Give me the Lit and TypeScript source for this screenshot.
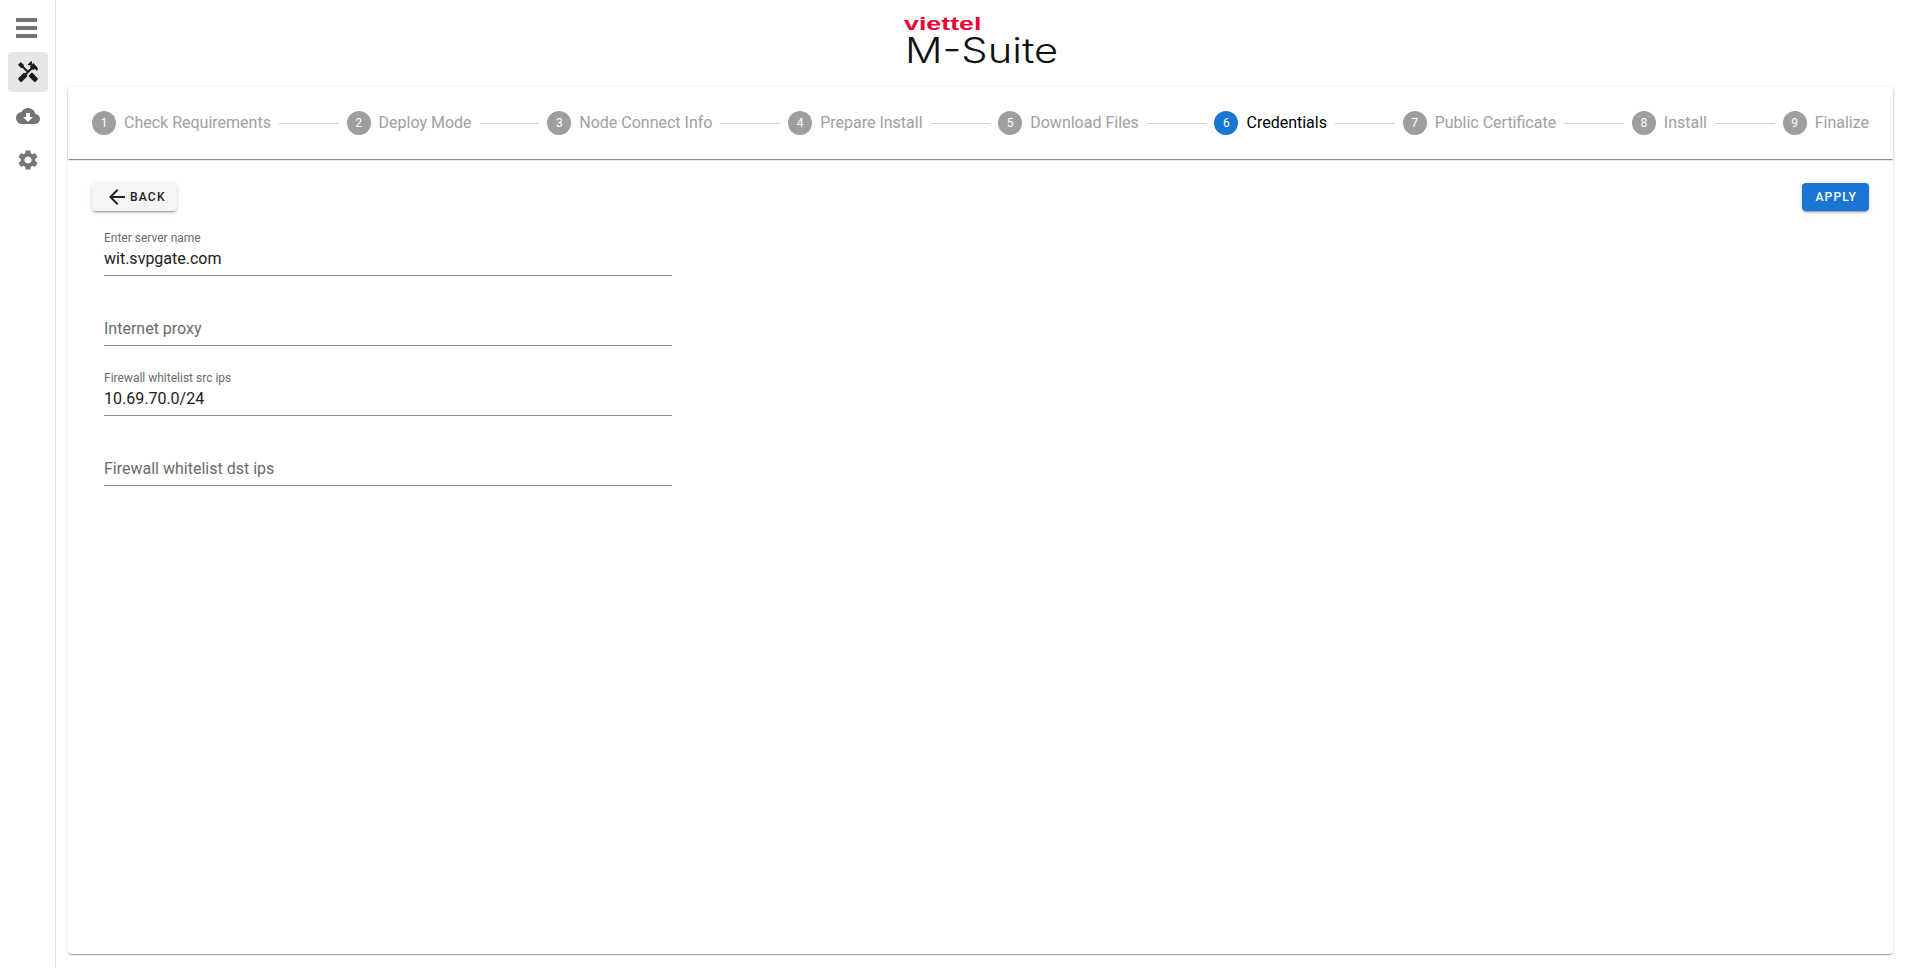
import { LitElement, html, css, svg } from "lit";
import { customElement } from "lit/decorators.js";

const STEPS = ["Check Requirements","Deploy Mode","Node Connect Info","Prepare Install","Download Files","Credentials","Public Certificate","Install","Finalize"];
const ACTIVE = 5;
const FIELDS = [
  { label: "Enter server name", value: "wit.svpgate.com" },
  { label: "Internet proxy", value: "" },
  { label: "Firewall whitelist src ips", value: "10.69.70.0/24" },
  { label: "Firewall whitelist dst ips", value: "" },
];
const ICONS = {
  handyman: "m21.67 18.17-5.3-5.3h-.99l-2.54 2.54v.99l5.3 5.3c.39.39 1.02.39 1.41 0l2.12-2.12c.39-.38.39-1.02 0-1.41zM17.34 10.19l1.41-1.41 2.12 2.12c1.17-1.17 1.17-3.07 0-4.24l-3.54-3.54-1.41 1.41V1.71l-.7-.71-3.54 3.54.71.71h2.83l-1.41 1.41 1.06 1.06-2.89 2.89-4.13-4.13V5.06L4.83 2.04 2 4.87 5.03 7.9h1.41l4.13 4.13-.85.85H7.6l-5.3 5.3c-.39.39-.39 1.02 0 1.41l2.12 2.12c.39.39 1.02.39 1.41 0l5.3-5.3v-2.12l5.15-5.15 1.06 1.05z",
  cloud: "M19.35 10.04C18.67 6.59 15.64 4 12 4 9.11 4 6.6 5.64 5.35 8.04 2.34 8.36 0 10.91 0 14c0 3.31 2.69 6 6 6h13c2.76 0 5-2.24 5-5 0-2.64-2.05-4.78-4.65-4.96zM17 13l-5 5-5-5h3V9h4v4h3z",
  settings: "M19.14 12.94c.04-.3.06-.61.06-.94 0-.32-.02-.64-.07-.94l2.03-1.58c.18-.14.23-.41.12-.61l-1.92-3.32c-.12-.22-.37-.29-.59-.22l-2.39.96c-.5-.38-1.03-.7-1.62-.94l-.36-2.54c-.04-.24-.24-.41-.48-.41h-3.84c-.24 0-.43.17-.47.41l-.36 2.54c-.59.24-1.13.57-1.62.94l-2.39-.96c-.22-.08-.47 0-.59.22L2.74 8.87c-.12.21-.08.47.12.61l2.03 1.58c-.05.3-.09.63-.09.94s.02.64.07.94l-2.03 1.58c-.18.14-.23.41-.12.61l1.92 3.32c.12.22.37.29.59.22l2.39-.96c.5.38 1.03.7 1.62.94l.36 2.54c.05.24.24.41.48.41h3.84c.24 0 .44-.17.47-.41l.36-2.54c.59-.24 1.13-.56 1.62-.94l2.39.96c.22.08.47 0 .59-.22l1.92-3.32c.12-.22.07-.47-.12-.61l-2.01-1.58zM12 15.6c-1.98 0-3.6-1.62-3.6-3.6s1.62-3.6 3.6-3.6 3.6 1.62 3.6 3.6-1.62 3.6-3.6 3.6z",
  arrow: "M20 11H7.83l5.59-5.59L12 4l-8 8 8 8 1.41-1.41L7.83 13H20v-2z",
};
const icon = (d: string, cls = "") => html`<svg class=${cls} viewBox="0 0 24 24" width="24" height="24" fill="currentColor">${svg`<path d=${d}></path>`}</svg>`;

@customElement("app-root")
export class AppRoot extends LitElement {
  static styles = css`
    :host { display: flex; width: 1905px; height: 968px; background: #fff; font-family: Roboto, "Liberation Sans", sans-serif; overflow: hidden; }
    .side { flex: none; border-right: 1px solid #e0e0e0; display: flex; flex-direction: column; gap: 4px; padding: 8px 0 0 8px; box-sizing: border-box; width: 56px; }
    .nav { width: 40px; height: 40px; border-radius: 4px; display: flex; align-items: center; justify-content: center; color: #757575; }
    .nav.on { background: #e6e6e6; color: #1a1a1a; }
    .menu { display: flex; flex-direction: column; gap: 4px; margin-left: -3px; }
    .menu i { display: block; width: 21px; height: 4px; background: #757575; }
    .main { flex: 1; min-width: 0; display: flex; flex-direction: column; padding: 0 12px 14px; }
    .head { height: 87px; flex: none; display: flex; justify-content: center; }
    .logo { width: 151px; padding-top: 14px; margin-left: -2px; display: flex; flex-direction: column; align-items: flex-start; white-space: nowrap; }
    .logo span { display: block; transform-origin: left center; }
    .vt { font: 700 19px/20px "Liberation Sans", sans-serif; color: #ee0033; transform: scaleX(1.41); }
    .ms { font: 300 35px/28px Inter, sans-serif; color: #111; margin-top: 2px; margin-left: 1px; transform: scaleX(1.19); }
    .card { flex: 1; display: flex; flex-direction: column; border-radius: 4px; background: #fff; box-shadow: 0 2px 1px -1px rgba(0,0,0,.2), 0 1px 1px 0 rgba(0,0,0,.14), 0 1px 3px 0 rgba(0,0,0,.12); }
    .stepper { height: 72px; flex: none; display: flex; align-items: center; padding: 0 24px; box-sizing: border-box; border-radius: 4px 4px 0 0; box-shadow: 0 2px 1px -1px rgba(0,0,0,.3), 0 1px 1px 0 rgba(0,0,0,.2), 0 1px 3px 0 rgba(0,0,0,.12); }
    .step { display: flex; align-items: center; flex: none; padding: 0 8px; }
    .step:first-child { padding-left: 0; }
    .step:last-child { padding-right: 0; }
    .dot { width: 24px; height: 24px; border-radius: 50%; background: #9e9e9e; color: #fff; font-size: 12px; display: flex; align-items: center; justify-content: center; margin-right: 8px; }
    .lbl { font-size: 16px; color: #a0a0a0; line-height: 24px; white-space: nowrap; }
    .step.on .dot { background: #1976d2; }
    .step.on .lbl { color: #000; }
    .conn { flex: 1; height: 1px; background: #bdbdbd; opacity: .7; }
    .body { flex: 1; padding: 24px 24px 0; }
    .bar { display: flex; justify-content: space-between; margin-bottom: 20px; }
    .btn { height: 28px; box-sizing: border-box; border: 0; border-radius: 4px; font: 500 12px/20px Roboto, sans-serif; letter-spacing: 1.2px; display: flex; align-items: center; box-shadow: 0 3px 1px -2px rgba(0,0,0,.2), 0 2px 2px 0 rgba(0,0,0,.14), 0 1px 5px 0 rgba(0,0,0,.12); }
    .back { background: #f5f5f5; color: #212121; padding: 0 11px 0 13px; gap: 1px; }
    .apply { background: #1976d2; color: #fff; padding: 0 12px 0 13px; }
    .fields { margin-left: 12px; width: 568px; display: flex; flex-direction: column; gap: 25px; }
    .field { display: flex; flex-direction: column; border-bottom: 1px solid #8c8c8c; padding-bottom: 4px; }
    .fl { font-size: 12px; line-height: 14px; color: #6b6b6b; height: 14px; margin-bottom: 2px; }
    .fv { font-size: 16px; line-height: 24px; color: #212121; height: 24px; }
    .fv.ph { color: #6b6b6b; }
  `;

  render() {
    return html`
      <aside class="side">
        <div class="nav"><div class="menu"><i></i><i></i><i></i></div></div>
        <div class="nav on">${icon(ICONS.handyman)}</div>
        <div class="nav">${icon(ICONS.cloud)}</div>
        <div class="nav">${icon(ICONS.settings)}</div>
      </aside>
      <main class="main">
        <header class="head">
          <div class="logo"><span class="vt">viettel</span><span class="ms">M-Suite</span></div>
        </header>
        <section class="card">
          <div class="stepper">
            ${STEPS.map((s, i) => html`
              ${i ? html`<div class="conn"></div>` : ""}
              <div class="step ${i === ACTIVE ? "on" : ""}"><span class="dot">${i + 1}</span><span class="lbl">${s}</span></div>
            `)}
          </div>
          <div class="body">
            <div class="bar">
              <button class="btn back">${icon(ICONS.arrow)}<span>BACK</span></button>
              <button class="btn apply">APPLY</button>
            </div>
            <div class="fields">
              ${FIELDS.map(f => html`
                <div class="field">
                  <div class="fl">${f.value ? f.label : ""}</div>
                  <div class="fv ${f.value ? "" : "ph"}">${f.value || f.label}</div>
                </div>
              `)}
            </div>
          </div>
        </section>
      </main>
    `;
  }
}
